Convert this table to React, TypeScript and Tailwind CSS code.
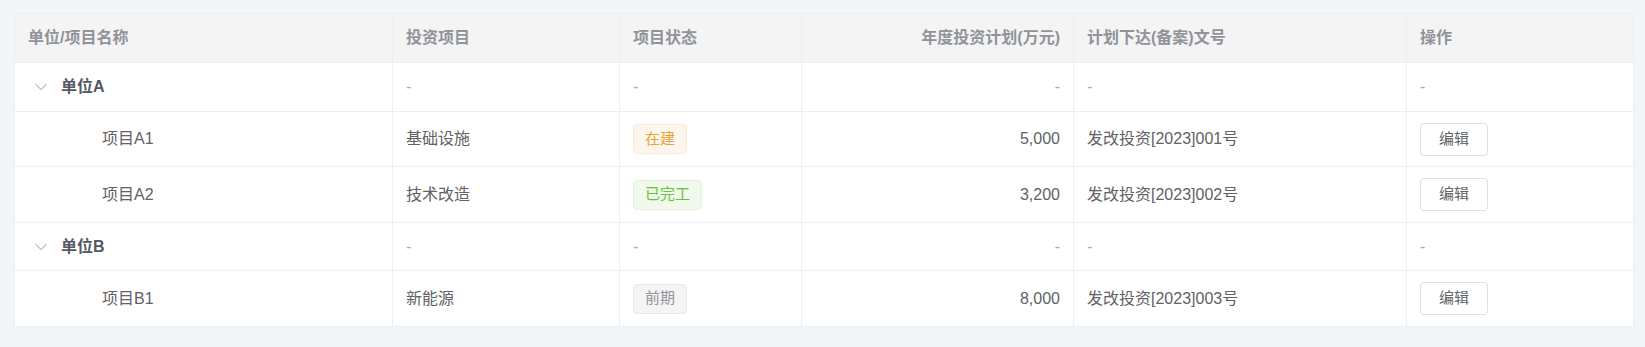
import { ChevronDown } from "lucide-react"

type Status = "在建" | "已完工" | "前期"

type ProjectRow = {
  id: string
  name: string
  category: string
  status: Status
  amount: number
  docNo: string
}

type UnitGroup = {
  id: string
  name: string
  projects: ProjectRow[]
}

const units: UnitGroup[] = [
  {
    id: "a",
    name: "单位A",
    projects: [
      { id: "a1", name: "项目A1", category: "基础设施", status: "在建", amount: 5000, docNo: "发改投资[2023]001号" },
      { id: "a2", name: "项目A2", category: "技术改造", status: "已完工", amount: 3200, docNo: "发改投资[2023]002号" },
    ],
  },
  {
    id: "b",
    name: "单位B",
    projects: [
      { id: "b1", name: "项目B1", category: "新能源", status: "前期", amount: 8000, docNo: "发改投资[2023]003号" },
    ],
  },
]

const statusStyle: Record<Status, string> = {
  在建: "bg-[#fdf6ec] border-[#faecd8] text-[#e6a23c]",
  已完工: "bg-[#f0f9eb] border-[#e1f3d8] text-[#67c23a]",
  前期: "bg-[#f4f4f5] border-[#e9e9eb] text-[#909399]",
}

// column widths include the right border
const cols = ["w-[378px]", "w-[227px]", "w-[182px]", "w-[272px]", "w-[333px]", "w-[226px]"]

function Cell({ i, right, children }: { i: number; right?: boolean; children?: React.ReactNode }) {
  return (
    <div
      className={`${cols[i]} shrink-0 flex items-center px-[13px] ${i < 5 ? "border-r border-[#ebeef5]" : ""} ${
        right ? "justify-end" : ""
      }`}
    >
      {children}
    </div>
  )
}

const Dash = () => <span className="text-[#a8abb2]">-</span>

export default function App() {
  const heads = ["单位/项目名称", "投资项目", "项目状态", "年度投资计划(万元)", "计划下达(备案)文号", "操作"]

  return (
    <div
      className="min-h-screen bg-[#f3f6f9] pt-[13px] pl-[14px]"
      style={{ fontFamily: '"Liberation Sans", "Noto Sans CJK SC", sans-serif' }}
    >
      <div className="w-[1620px] border border-[#ebeef5] bg-white text-[16px] text-[#606266]">
        {/* 表头 */}
        <div className="flex h-[49px] border-b border-[#ebeef5] bg-[#f4f4f5] font-bold text-[#909399]">
          {heads.map((h, i) => (
            <Cell key={h} i={i} right={i === 3}>
              {h}
            </Cell>
          ))}
        </div>

        {units.map((u, ui) => (
          <div key={u.id}>
            <div className={`flex border-b border-[#ebeef5] ${ui === 0 ? "h-[49px]" : "h-[48px]"}`}>
              <Cell i={0}>
                <span className="w-[26px] flex justify-center text-[#7d8088]">
                  <ChevronDown size={20} strokeWidth={1} />
                </span>
                <span className="ml-[7px] font-bold text-[#555860]">{u.name}</span>
              </Cell>
              <Cell i={1}>
                <Dash />
              </Cell>
              <Cell i={2}>
                <Dash />
              </Cell>
              <Cell i={3} right>
                <Dash />
              </Cell>
              <Cell i={4}>
                <Dash />
              </Cell>
              <Cell i={5}>
                <Dash />
              </Cell>
            </div>

            {u.projects.map((p, pi) => {
              const last = ui === units.length - 1 && pi === u.projects.length - 1
              const first = ui === 0 && pi === 0
              return (
                <div
                  key={p.id}
                  className={`flex ${last ? "h-[55px]" : "border-b border-[#ebeef5]"} ${
                    !last && first ? "h-[55px]" : ""
                  } ${!last && !first ? "h-[56px]" : ""}`}
                >
                  <Cell i={0}>
                    <span className="pl-[74px]">{p.name}</span>
                  </Cell>
                  <Cell i={1}>{p.category}</Cell>
                  <Cell i={2}>
                    <span
                      className={`h-[30px] px-[11px] flex items-center rounded-[4px] border text-[15px] ${statusStyle[p.status]}`}
                    >
                      {p.status}
                    </span>
                  </Cell>
                  <Cell i={3} right>
                    {p.amount.toLocaleString("en-US")}
                  </Cell>
                  <Cell i={4}>{p.docNo}</Cell>
                  <Cell i={5}>
                    <button className="h-[33px] w-[68px] rounded-[4px] border border-[#dcdfe6] bg-white text-[15px] text-[#606266]">
                      编辑
                    </button>
                  </Cell>
                </div>
              )
            })}
          </div>
        ))}
      </div>
    </div>
  )
}
